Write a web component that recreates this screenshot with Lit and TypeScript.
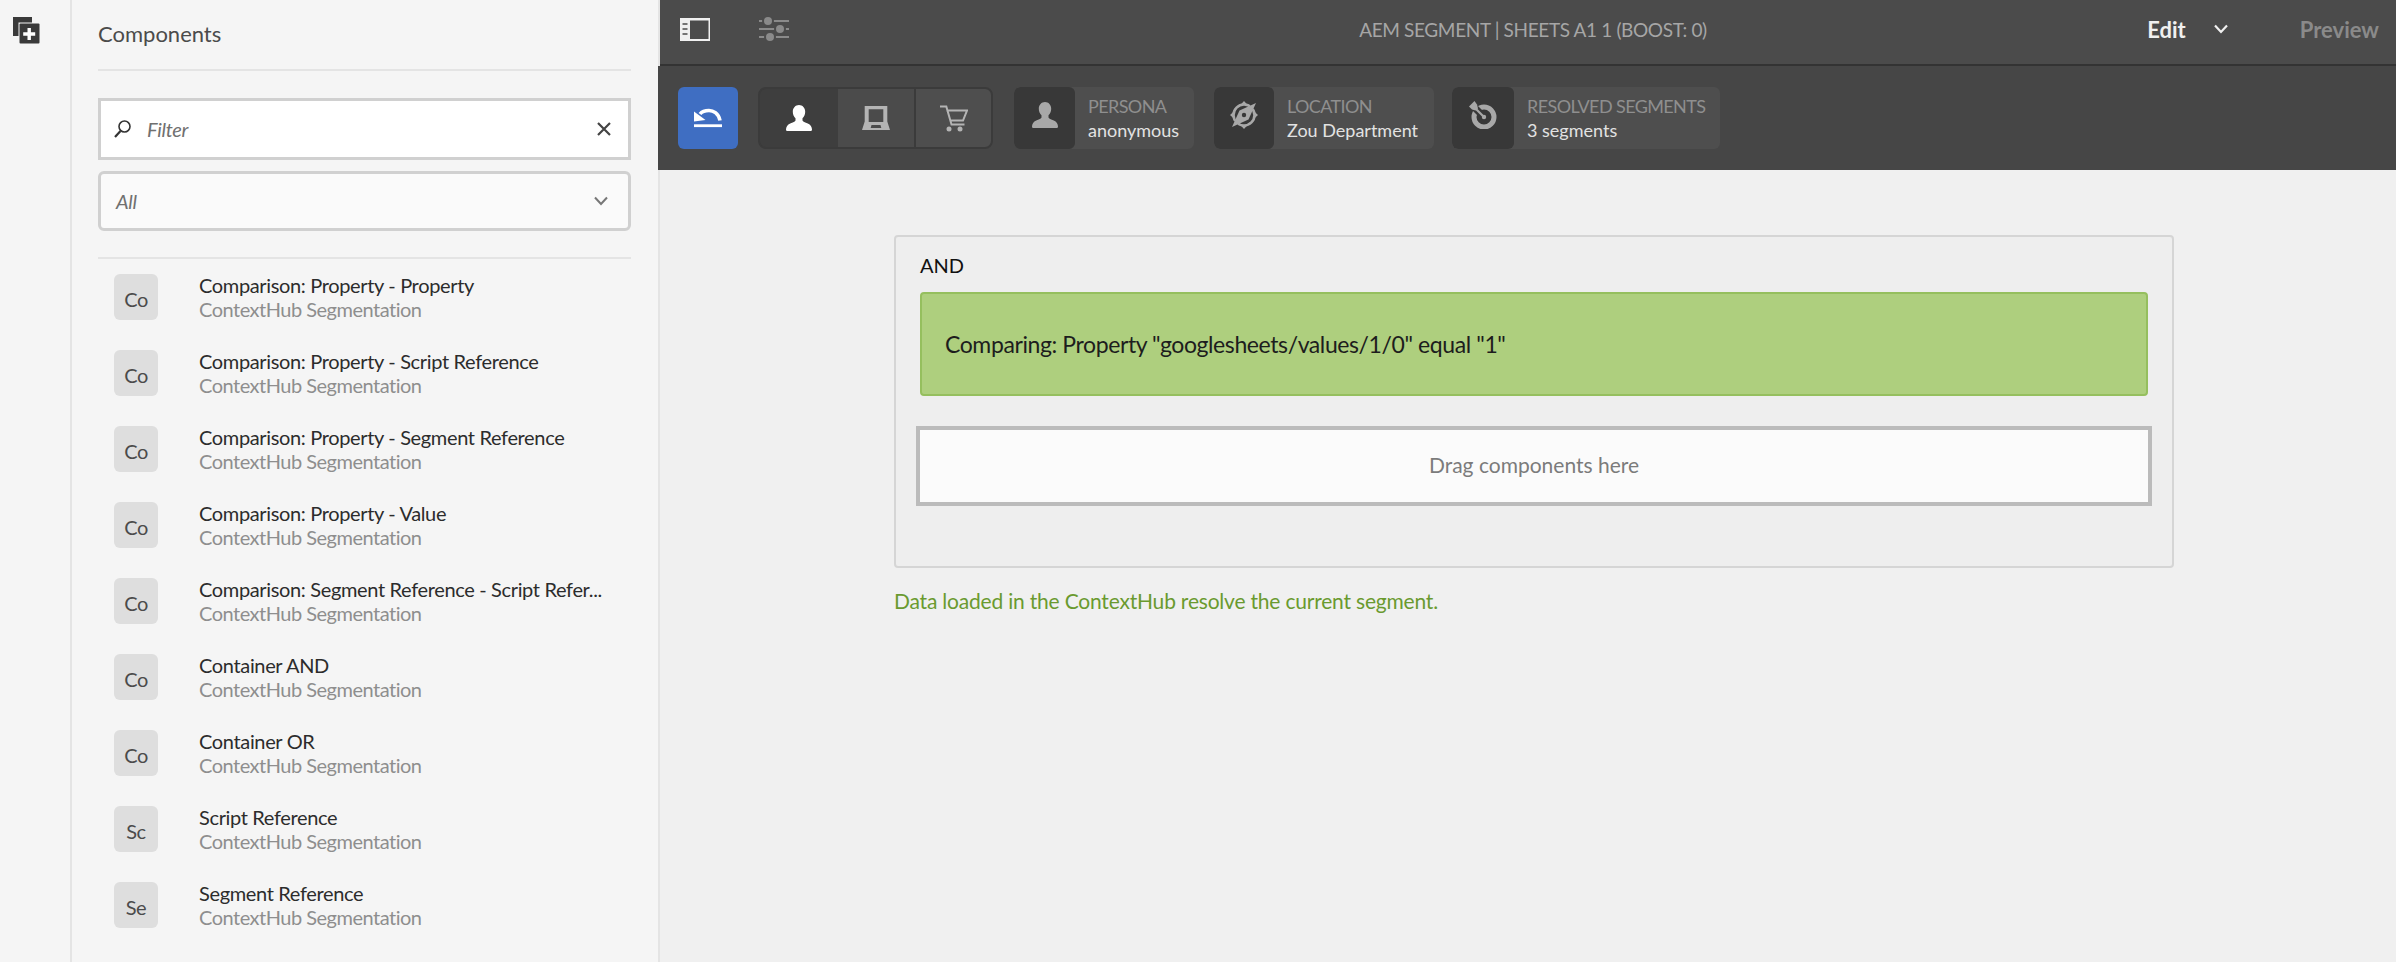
import { LitElement, html, css, svg } from 'lit';
import { customElement } from 'lit/decorators.js';

const rows = [
  ['Co', 'Comparison: Property - Property'],
  ['Co', 'Comparison: Property - Script Reference'],
  ['Co', 'Comparison: Property - Segment Reference'],
  ['Co', 'Comparison: Property - Value'],
  ['Co', 'Comparison: Segment Reference - Script Refer...'],
  ['Co', 'Container AND'],
  ['Co', 'Container OR'],
  ['Sc', 'Script Reference'],
  ['Se', 'Segment Reference'],
];

const person = svg`<path fill="currentColor" d="M13 0c3.500 0 6.200 2.800 6.200 6.800 0 2.700-1.100 5-2.700 6.500v2.200c0 1.300 2.800 1.800 5.300 2.900 2.700 1.200 4.200 3.400 4.200 6.100 0 .9-.4 1.500-1.300 1.500H1.300C.4 26 0 25.400 0 24.500c0-2.700 1.500-4.900 4.200-6.100 2.500-1.100 5.300-1.600 5.300-2.900v-2.200C7.900 11.800 6.800 9.500 6.800 6.800 6.800 2.800 9.500 0 13 0z"/>`;

@customElement('app-root')
export class AppRoot extends LitElement {
  static styles = css`
    :host {
      display: grid;
      grid-template-columns: 72px 588px 1fr;
      height: 962px;
      overflow: hidden;
      font-family: 'Lato', 'Open Sans', sans-serif;
      background: #f0f0f0;
    }
    svg { display: block; flex: none; }
    .rail {
      background: #f5f5f5;
      border-right: 2px solid #e4e4e4;
      padding: 17px 0 0 13px;
      box-sizing: border-box;
    }
    .panel {
      background: #f5f5f5;
      border-right: 2px solid #e4e4e4;
      padding: 0 27px 0 26px;
      box-sizing: border-box;
    }
    .panel-title {
      height: 71px;
      box-sizing: border-box;
      border-bottom: 2px solid #e4e4e4;
      padding-bottom: 3px;
      display: flex;
      align-items: center;
      font-size: 22px;
      color: #4b4b4b;
    }
    .filter {
      margin-top: 27px;
      height: 62px;
      box-sizing: border-box;
      background: #fff;
      border: 3px solid #d0d0d0;
      display: flex;
      align-items: center;
      padding: 0 17px 0 13px;
      font-size: 20px;
      font-style: italic;
      letter-spacing: -0.3px;
      color: #707070;
    }
    .filter span { flex: 1; margin-left: 16px; }
    .select {
      margin-top: 11px;
      height: 60px;
      box-sizing: border-box;
      background: #fafafa;
      border: 3px solid #d0d0d0;
      border-radius: 6px;
      display: flex;
      align-items: center;
      justify-content: space-between;
      padding: 0 20px 0 15px;
      font-size: 20px;
      font-style: italic;
      letter-spacing: -0.3px;
      color: #707070;
    }
    .rule { margin-top: 26px; height: 2px; background: #e4e4e4; }
    .row {
      height: 76px;
      display: flex;
      align-items: center;
      padding-left: 16px;
    }
    .badge {
      width: 44px;
      height: 46px;
      flex: none;
      border-radius: 6px;
      background: #dedede;
      color: #4b4b4b;
      font-size: 20px;
      letter-spacing: -0.4px;
      display: flex;
      align-items: center;
      justify-content: center;
      padding-top: 3px;
      box-sizing: border-box;
    }
    .row-text { margin-left: 41px; white-space: nowrap; }
    .row-title { font-size: 20px; line-height: 24px; letter-spacing: -0.35px; color: #2c2c2c; }
    .row-sub { font-size: 20px; line-height: 24px; letter-spacing: -0.5px; color: #8e8e8e; }
    .main { display: flex; flex-direction: column; min-width: 0; }
    .topbar {
      height: 64px;
      flex: none;
      background: #4b4b4b;
      border-bottom: 2px solid #333;
      display: grid;
      grid-template-columns: 1fr auto 1fr;
      align-items: center;
      padding-left: 10px;
    }
    .topbar > * { margin-bottom: 6px; }
    .top-left { display: flex; align-items: center; gap: 49px; padding-left: 10px; }
    .title { font-size: 19px; letter-spacing: -0.36px; color: #a6a6a6; }
    .top-right {
      display: flex;
      align-items: center;
      justify-content: flex-end;
      padding-right: 17px;
      font-size: 22px;
      font-weight: 700;
    }
    .edit { color: #f0f0f0; }
    .top-right svg { margin: 0 72px 0 28px; }
    .preview { color: #8a8a8a; }
    .ctxbar {
      height: 104px;
      flex: none;
      margin-left: -2px;
      box-sizing: border-box;
      background: #464646;
      display: flex;
      align-items: center;
      padding-left: 20px;
    }
    .undo {
      width: 60px;
      height: 62px;
      border-radius: 6px;
      background: #3f6ec2;
      display: flex;
      align-items: center;
      justify-content: center;
    }
    .segs {
      margin-left: 20px;
      width: 235px;
      height: 62px;
      box-sizing: border-box;
      border: 2px solid #3b3b3b;
      border-radius: 8px;
      display: flex;
      overflow: hidden;
      background: #3b3b3b;
    }
    .seg {
      display: flex;
      align-items: center;
      justify-content: center;
      background: #4e4e4e;
      color: #b4b4b4;
    }
    .seg.on { width: 78px; background: #3e3e3e; color: #fff; }
    .seg.mid { width: 76px; background: #4b4b4b; margin-right: 2px; }
    .seg.end { flex: 1; }
    .card {
      height: 62px;
      display: flex;
      border-radius: 6px;
      background: #4e4e4e;
      overflow: hidden;
      white-space: nowrap;
    }
    .card-icon {
      background: #383838;
      border-radius: 6px;
      display: flex;
      align-items: center;
      justify-content: center;
      color: #a8a8a8;
      padding-bottom: 6px;
      box-sizing: border-box;
    }
    .card-text {
      padding-left: 13px;
      box-sizing: border-box;
      display: flex;
      flex-direction: column;
      justify-content: center;
      font-size: 18px;
      line-height: 24px;
    }
    .card-label { color: #8f8f8f; letter-spacing: -0.6px; }
    .card-value { color: #e2e2e2; }
    .canvas { flex: 1; padding: 65px 0 0 234px; }
    .container {
      width: 1280px;
      height: 333px;
      box-sizing: border-box;
      border: 2px solid #d5d5d5;
      border-radius: 4px;
      background: #eee;
      padding: 0 24px;
    }
    .and {
      height: 55px;
      display: flex;
      align-items: center;
      font-size: 20px;
      color: #111;
    }
    .cond {
      height: 104px;
      box-sizing: border-box;
      background: #aecf7e;
      border: 2px solid #95bf5e;
      border-radius: 4px;
      display: flex;
      align-items: center;
      padding-left: 23px;
      font-size: 23px;
      letter-spacing: -0.4px;
      color: #1d1d1d;
    }
    .drop {
      margin: 30px -4px 0;
      height: 80px;
      box-sizing: border-box;
      background: #fbfbfb;
      border: 4px solid #bbb;
      display: flex;
      align-items: center;
      justify-content: center;
      padding-bottom: 4px;
      font-size: 21px;
      color: #7b7b7b;
    }
    .note { margin-top: 19px; font-size: 21px; letter-spacing: -0.2px; line-height: 28px; color: #6a9a2f; }
  `;

  private cardBlock(icon: unknown, iconW: number, textW: number, label: string, value: string, gap: number) {
    return html`<div class="card" style="margin-left:${gap}px">
      <div class="card-icon" style="width:${iconW}px">${icon}</div>
      <div class="card-text" style="width:${textW}px">
        <div class="card-label">${label}</div>
        <div class="card-value">${value}</div>
      </div>
    </div>`;
  }

  render() {
    const personSmall = html`<svg width="26" height="26" viewBox="0 0 26 26">${person}</svg>`;
    const compass = html`<svg width="30" height="30" viewBox="0 0 30 30" fill="none" stroke="currentColor">
      <circle cx="15" cy="15" r="10.500" stroke-width="2.600"/>
      <path fill="currentColor" stroke="none" d="M15 1l3.200 3.500h-6.400zM15 29l-3.200-3.500h6.400zM1 15l3.500-3.200v6.400zM29 15l-3.500-3.200v6.400z"/>
      <path stroke="#383838" stroke-width="4.500" d="M26 4L4 26"/>
      <path fill="currentColor" stroke="none" d="M27 3L19.500 19.500 3 27l7.500-16.500z"/>
      <circle cx="15" cy="15" r="2.200" fill="#383838" stroke="none"/>
    </svg>`;
    const target = html`<svg width="28" height="28" viewBox="0 0 28 28" fill="none" stroke="currentColor">
      <circle cx="15" cy="16" r="10" stroke-width="5"/>
      <path stroke="#383838" stroke-width="7" d="M15 16L4 5"/>
      <circle cx="15" cy="16" r="2.200" fill="currentColor" stroke="none"/>
      <path stroke-width="2.200" d="M14 15L6 7"/>
      <path fill="currentColor" stroke="none" d="M0 5.500L5.500 0l2.500 3.500 1 4-2.500 2-3.500-1z"/>
    </svg>`;

    return html`
      <div class="rail">
        <svg width="27" height="27" viewBox="0 0 27 27">
          <path fill="#3a3a3a" d="M0 0h19v5.500H5.500V19H0z"/>
          <rect x="6.500" y="6.500" width="20" height="20" rx="1" fill="#3a3a3a"/>
          <path fill="#fff" d="M14.500 11h3.400v4.300h4.300v3.400h-4.300V23h-3.400v-4.300h-4.300v-3.400h4.300z"/>
        </svg>
      </div>
      <div class="panel">
        <div class="panel-title">Components</div>
        <div class="filter">
          <svg width="17" height="18" viewBox="0 0 17 18" fill="none" stroke="#333" stroke-width="1.600">
            <circle cx="10.500" cy="6.500" r="5.500"/><path stroke-width="2.200" d="M6.500 11L1 17"/>
          </svg>
          <span>Filter</span>
          <svg width="14" height="14" viewBox="0 0 14 14" stroke="#444" stroke-width="2.200"><path d="M1 1l12 12M13 1L1 13"/></svg>
        </div>
        <div class="select">
          <span>All</span>
          <svg width="14" height="10" viewBox="0 0 14 10" fill="none" stroke="#777" stroke-width="2"><path d="M1 1.500l6 6.500 6-6.500"/></svg>
        </div>
        <div class="rule"></div>
        <div class="list">
          ${rows.map(([b, t]) => html`<div class="row">
            <div class="badge">${b}</div>
            <div class="row-text">
              <div class="row-title">${t}</div>
              <div class="row-sub">ContextHub Segmentation</div>
            </div>
          </div>`)}
        </div>
      </div>
      <div class="main">
        <div class="topbar">
          <div class="top-left">
            <svg width="30" height="23" viewBox="0 0 30 23">
              <path fill="#f0f0f0" fill-rule="evenodd" d="M0 0h30v23H0zM10 2.500v18.500h18.500V2.500z"/>
              <path stroke="#4b4b4b" stroke-width="1.600" d="M2.500 6h5M2.500 11h5M2.500 16h5"/>
            </svg>
            <svg width="30" height="24" viewBox="0 0 30 24">
              <path stroke="#8a8a8a" stroke-width="2" d="M0 4h30M0 12h30M0 20h30"/>
              <g fill="#4b4b4b">
                <circle cx="9" cy="4" r="6"/><circle cx="21" cy="12" r="6"/><circle cx="11" cy="20" r="6"/>
              </g>
              <g fill="#8a8a8a">
                <circle cx="9" cy="4" r="4"/><circle cx="21" cy="12" r="4"/><circle cx="11" cy="20" r="4"/>
              </g>
            </svg>
          </div>
          <div class="title">AEM SEGMENT | SHEETS A1 1 (BOOST: 0)</div>
          <div class="top-right">
            <span class="edit">Edit</span>
            <svg width="14" height="10" viewBox="0 0 14 10" fill="none" stroke="#f0f0f0" stroke-width="2.200"><path d="M1 1.500l6 6.500 6-6.500"/></svg>
            <span class="preview">Preview</span>
          </div>
        </div>
        <div class="ctxbar">
          <div class="undo">
            <svg width="28" height="20" viewBox="0 0 28 20" fill="none" stroke="#fff">
              <path stroke-width="2.800" d="M0 17.700h28"/>
              <path stroke-width="3.600" d="M26 12.500C24.500 5 19 2.500 15 2.500 11 2.500 8 3.500 6 6"/>
              <path fill="#fff" stroke="none" d="M0 3.500V13.500l11.500-1.500z"/>
            </svg>
          </div>
          <div class="segs">
            <div class="seg on"><svg width="26" height="26" viewBox="0 0 26 26">${person}</svg></div>
            <div class="seg mid">
              <svg width="28" height="24" viewBox="0 0 28 24">
                <path fill="currentColor" fill-rule="evenodd" d="M2.700 0h22.600v15.500L28 24H0l2.700-8.500zM6.700 3.300V16h14.600V3.300zM9.500 19l-.8 3h10.600l-.8-3z"/>
              </svg>
            </div>
            <div class="seg end">
              <svg width="28" height="27" viewBox="0 0 28 27" fill="none" stroke="currentColor" stroke-width="2">
                <path d="M0 1.500h6.300l5.200 18H24.500M6.500 5.500H27l-4 10H10"/>
                <circle cx="9" cy="24" r="2.500" fill="currentColor" stroke="none"/><circle cx="20" cy="24" r="2.500" fill="currentColor" stroke="none"/>
              </svg>
            </div>
          </div>
          ${this.cardBlock(personSmall, 61, 119, 'PERSONA', 'anonymous', 21)}
          ${this.cardBlock(compass, 60, 160, 'LOCATION', 'Zou Department', 20)}
          ${this.cardBlock(target, 62, 206, 'RESOLVED SEGMENTS', '3 segments', 18)}
        </div>
        <div class="canvas">
          <div class="container">
            <div class="and">AND</div>
            <div class="cond">Comparing: Property "googlesheets/values/1/0" equal "1"</div>
            <div class="drop">Drag components here</div>
          </div>
          <div class="note">Data loaded in the ContextHub resolve the current segment.</div>
        </div>
      </div>
    `;
  }
}
